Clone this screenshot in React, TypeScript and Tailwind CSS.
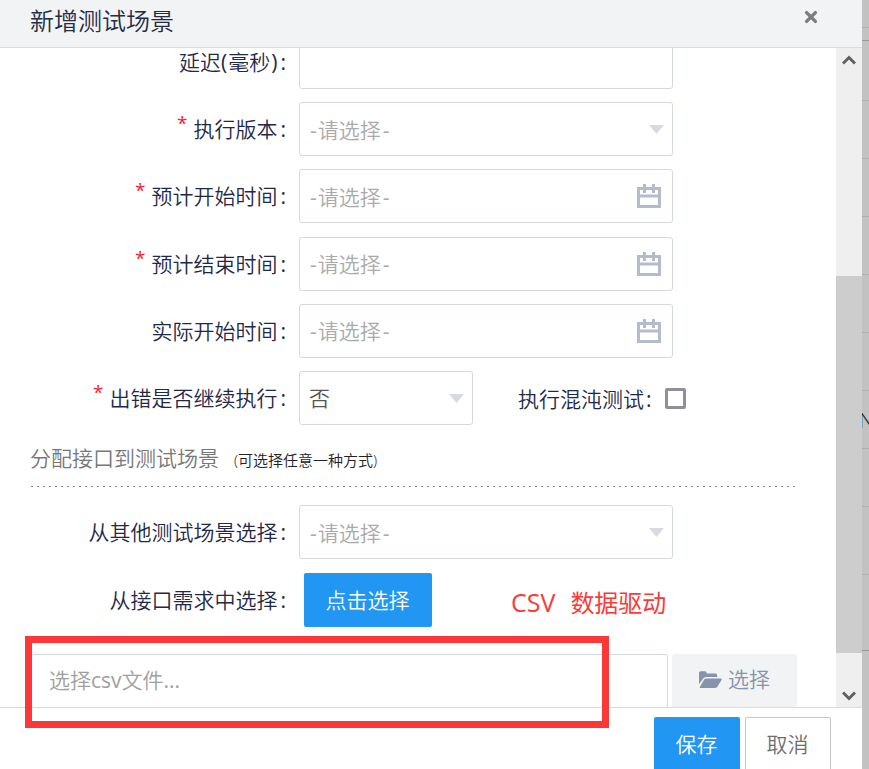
import type { ReactNode } from "react";

const backdropLines = [27, 40, 100, 158, 216, 274, 332, 390, 448, 506, 574, 650];

function CalendarIcon() {
  return (
    <svg width="24" height="24" viewBox="0 0 24 24" shapeRendering="crispEdges">
      <path
        d="M0 3h24v21H0zM3 6v15h18V6z"
        fill="#b4bccb"
        fillRule="evenodd"
      />
      <path d="M6 0h3v9H6zM15 0h3v9h-3z" fill="#b4bccb" />
      <path d="M3 10h18v4H3z" fill="#d9dde5" />
      <path d="M3 11h18v2H3z" fill="#b4bccb" />
    </svg>
  );
}

function FolderOpenIcon() {
  return (
    <svg
      className="mr-[6px] shrink-0"
      width="23"
      height="18"
      viewBox="0 0 23 18"
      fill="#8593ab"
    >
      <path d="M0 15V2Q0 .3 1.7.3H6Q7.7.3 7.7 2V2.5H16.3Q18.2 2.5 18.2 4.4V6H7.4Q5.3 6 4 7.7L0 13.3z" />
      <path d="M7.4 7.4H21.8Q23.3 7.4 22.6 8.7L18.4 15.7Q17.5 17.1 15.9 17.1H1.6Q.2 17.1 1 15.8L5 8.8Q5.8 7.4 7.4 7.4z" />
    </svg>
  );
}

function Caret() {
  return (
    <svg width="15" height="9" viewBox="0 0 15 9">
      <path d="M0 0h15L7.5 9z" fill="#d7dae2" />
    </svg>
  );
}

function Label({ text, required }: { text: ReactNode; required?: boolean }) {
  return (
    <div className="flex w-[286px] shrink-0 justify-end whitespace-pre text-[21px] leading-[55px] text-[#1f2947]">
      {required && (
        <span className="relative -top-[6px] mr-[6px] text-[19px] font-normal text-[#ff1a2d]">*</span>
      )}
      <span>{text}</span>
      <span className="ml-[3px] font-medium">:</span>
    </div>
  );
}

function Row({
  text,
  required,
  className,
  children,
}: {
  text: ReactNode;
  required?: boolean;
  className?: string;
  children: ReactNode;
}) {
  return (
    <div className={`flex h-[54px] shrink-0 ${className ?? ""}`}>
      <Label text={text} required={required} />
      {children}
    </div>
  );
}

function Field({ icon, raised }: { icon?: "caret" | "calendar"; raised?: boolean }) {
  return (
    <div
      className={`ml-[13px] flex h-[54px] w-[374px] items-center justify-between rounded-[3px] border border-[#d3d8e2] pl-[10px] text-[21px] leading-[52px] text-[#aaaaaa] ${
        icon === "caret" ? "pr-[8px]" : "pr-[11px]"
      }`}
    >
      <span className={raised ? "pb-px" : "pt-px"}>
        {icon && (
          <>
            <span className="mr-px font-medium">-</span>请选择
            <span className="ml-[2px] font-medium">-</span>
          </>
        )}
      </span>
      {icon === "caret" && <Caret />}
      {icon === "calendar" && <CalendarIcon />}
    </div>
  );
}

export default function App() {
  return (
    <div className="relative flex h-[769px] w-[869px] overflow-hidden bg-[#c2c2c2] font-['Open_Sans','Noto_Sans_CJK_SC',sans-serif] font-[350]">
      {/* Dialog */}
      <div className="flex w-[862px] flex-col bg-white">
        <div className="flex h-[48px] shrink-0 justify-between border-b border-[#d9dbe0] bg-[#f2f3f5] pl-[30px] pr-[44px]">
          <h2 className="text-[24px] font-[350] leading-[42px] text-[#232c45]">新增测试场景</h2>
          <svg className="mt-[10px]" width="14" height="14" viewBox="0 0 14 14">
            <path
              d="M2.6 2.6l8.8 8.8M11.4 2.6l-8.8 8.8"
              stroke="#7d7d7d"
              strokeWidth="3.4"
              strokeLinecap="round"
            />
          </svg>
        </div>

        <div className="flex h-[659px] shrink-0">
          {/* Scrolled form */}
          <div className="flex w-[836px] flex-col overflow-hidden">
            <Row
              text={
                <>
                  延迟<span className="mr-px font-normal">(</span>毫秒
                  <span className="ml-px font-normal">)</span>
                </>
              }
              className="-mt-[13px]"
            >
              <Field />
            </Row>
            <Row text="执行版本" required className="mt-[13px]">
              <Field icon="caret" />
            </Row>
            <Row text="预计开始时间" required className="mt-[13px]">
              <Field icon="calendar" />
            </Row>
            <Row text="预计结束时间" required className="mt-[14px]">
              <Field icon="calendar" raised />
            </Row>
            <Row text="实际开始时间" className="mt-[13px]">
              <Field icon="calendar" raised />
            </Row>
            <Row text="出错是否继续执行" required className="mt-[13px]">
              <div className="ml-[13px] flex w-[174px] items-center justify-between rounded-[3px] border border-[#d3d8e2] pl-[9px] pr-[8px] text-[21px] text-[#555555]">
                <span className="pt-px">否</span>
                <Caret />
              </div>
              <span className="ml-[45px] pt-px text-[21px] leading-[54px] text-[#1f2947]">
                执行混沌测试<span className="ml-[2px] font-medium">:</span>
              </span>
              <span className="ml-[13px] mt-[17px] h-[21px] w-[21px] rounded-[2px] border-[3px] border-[#918e9d]" />
            </Row>

            <div className="ml-[30px] mt-[12px] flex h-[42px] w-[767px] shrink-0 items-baseline">
              <span className="text-[21px] leading-[42px] text-[#777777]">分配接口到测试场景</span>
              <span className="ml-[15px] text-[15px] text-[#222222]">(可选择任意一种方式)</span>
            </div>
            <svg className="ml-[30px] mt-[7px] shrink-0" width="767" height="1">
              <path d="M1 .5h766" stroke="#8c8c8c" strokeDasharray="2 4" />
            </svg>

            <Row text="从其他测试场景选择" className="mt-[18px]">
              <Field icon="caret" />
            </Row>
            <Row text="从接口需求中选择" className="mt-[14px]">
              <button className="ml-[18px] w-[128px] rounded-[2px] bg-[#2196f3] pr-px pt-px text-[21px] text-white">
                点击选择
              </button>
              <span className="ml-[79px] mt-px whitespace-pre text-[24px] font-normal leading-[57px] text-[#fb3939]">
                <span className="text-[25px]">CSV</span>
                <span className="ml-[15px]">数据驱动</span>
              </span>
            </Row>

            <div className="ml-[31px] mt-[27px] flex h-[54px] shrink-0">
              <div className="w-[637px] rounded-[3px] border border-[#d3d8e2] pl-[17px] text-[21px] leading-[50px] text-[#a0a0a0]">
                选择<span className="font-normal">csv</span>文件<span className="font-medium">...</span>
              </div>
              <button className="ml-[4px] flex w-[125px] items-center justify-center rounded-[3px] bg-[#f2f3f5] pb-[2px] text-[21px] text-[#8593ab]">
                <FolderOpenIcon />
                选择
              </button>
            </div>
          </div>

          {/* Scrollbar */}
          <div className="flex w-[26px] flex-col items-center bg-[#efefef]">
            <svg className="mt-[7px] shrink-0" width="14" height="10" viewBox="0 0 14 10">
              <path d="M1 8.5l6-6 6 6" fill="none" stroke="#606060" strokeWidth="3" />
            </svg>
            <div className="mt-[211px] h-[377px] w-full shrink-0 bg-[#cdcdcd]" />
            <svg className="mt-[38px] shrink-0" width="14" height="10" viewBox="0 0 14 10">
              <path d="M1 1.5l6 6 6-6" fill="none" stroke="#606060" strokeWidth="3" />
            </svg>
          </div>
        </div>

        <div className="flex h-[62px] shrink-0 border-t border-[#d9dbe0] pl-[654px] pt-[9px] text-[21px]">
          <button className="h-[54px] w-[86px] shrink-0 rounded-[2px] bg-[#2196f3] pr-px pt-px text-white">
            保存
          </button>
          <button className="ml-[5px] h-[54px] w-[86px] shrink-0 rounded-[2px] border border-[#c8c8c8] pr-px pt-px text-[#6e6e6e]">
            取消
          </button>
        </div>
      </div>

      {/* Page behind the dialog */}
      <div className="relative w-[7px] overflow-hidden">
        {backdropLines.map((y) => (
          <div
            key={y}
            className={`absolute h-px w-full ${
              y === 40 || y === 650 ? "bg-[#989898]" : "bg-[#b0b0b0]"
            }`}
            style={{ top: y }}
          />
        ))}
        <span className="absolute -left-[3px] top-[406px] text-[21px] leading-[28px] text-[#222222]">
          N
        </span>
      </div>

      {/* Highlight around the file picker */}
      <div className="absolute left-[25px] top-[636px] h-[92px] w-[584px] border-[7px] border-[#fb3737]" />
    </div>
  );
}
